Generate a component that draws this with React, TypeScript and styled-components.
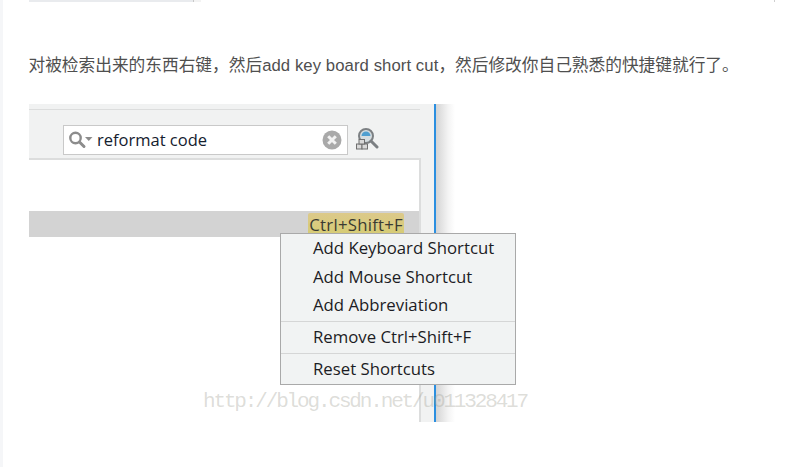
import styled, { createGlobalStyle } from 'styled-components';

const GlobalStyle = createGlobalStyle`
  html, body {
    margin: 0;
    padding: 0;
    background: #fff;
  }
`;

const Page = styled.div`
  position: relative;
  width: 790px;
  height: 467px;
  overflow: hidden;
  background: #fff;
  display: flex;
`;

const LeftGutter = styled.div`
  width: 3px;
  flex-shrink: 0;
  background: #f5f6f8;
`;

const Content = styled.div`
  flex-grow: 1;
  padding-left: 26px;
  display: flex;
  flex-direction: column;
`;

const TopScrap = styled.div`
  display: flex;
  height: 2px;
`;

const ScrapBar = styled.div`
  width: 164px;
  background: #e9ebee;
  border-right: 1px solid #c8c8c8;
`;

const ScrapTail = styled.div`
  width: 7px;
  background: #f3f3f3;
`;

const Paragraph = styled.p`
  margin: 53px 0 0 -0.5px;
  height: 22px;
  line-height: 22px;
  font-family: "Liberation Sans", "Noto Sans CJK SC", sans-serif;
  font-size: 16.7px;
  color: #4f4f4f;
  white-space: nowrap;
`;

const Latin = styled.span`
  letter-spacing: 0.08px;
`;

const Shot = styled.div`
  position: relative;
  margin-top: 27px;
  width: 426px;
  height: 318px;
  display: flex;
  font-family: "Open Sans", "Noto Sans", sans-serif;
`;

const Window = styled.div`
  width: 405px;
  background: #f1f2f2;
  display: flex;
  flex-direction: column;
`;

const BlueEdge = styled.div`
  width: 2px;
  background: #2b8fe0;
`;

const Shadow = styled.div`
  width: 19px;
  background: linear-gradient(to right, #d4d4d4, #f4f4f4 65%, #fff);
`;

const TopLine = styled.div`
  margin-top: 5px;
  width: 391px;
  height: 1px;
  background: #dcdddd;
`;

const Toolbar = styled.div`
  box-sizing: border-box;
  height: 48px;
  padding: 0 0 3px 34px;
  display: flex;
  align-items: flex-end;
`;

const SearchBox = styled.div`
  box-sizing: border-box;
  width: 285px;
  height: 30px;
  padding: 0 5px;
  display: flex;
  align-items: center;
  background: #fff;
  border: 1px solid #c9c9c9;
`;

const SearchText = styled.span`
  flex-grow: 1;
  margin: 0 0 2px 4px;
  font-size: 16.5px;
  color: #14202e;
`;

const FinderIcon = styled.svg`
  margin: 0 0 4px 7px;
`;

const ListArea = styled.div`
  box-sizing: border-box;
  width: 392px;
  flex-grow: 1;
  padding-top: 51px;
  background: #fff;
  border-top: 2px solid #dcdddd;
  border-right: 2px solid #dcdddd;
`;

const SelectedRow = styled.div`
  height: 26px;
  padding-right: 15px;
  display: flex;
  justify-content: flex-end;
  align-items: flex-end;
  background: #d3d3d3;
`;

const ShortcutMark = styled.span`
  box-sizing: border-box;
  height: 24px;
  padding: 0 1px;
  line-height: 24px;
  font-size: 16.75px;
  letter-spacing: 0.25px;
  color: #3a3a32;
  border-radius: 2px 2px 0 0;
  background: linear-gradient(to bottom, #dcc98a, #d5cc72);
`;

const Menu = styled.div`
  position: absolute;
  left: 251px;
  top: 129px;
  box-sizing: border-box;
  width: 236px;
  height: 152px;
  background: #f1f3f3;
  border: 1px solid #a9a9a9;
`;

const MenuItem = styled.div`
  height: 28.5px;
  line-height: 28.5px;
  padding-left: 32px;
  font-size: 16.75px;
  color: #1c1c24;
  white-space: nowrap;
`;

const MenuDivider = styled.div`
  height: 1px;
  margin: 1.25px 0;
  background: #d5d6d6;
`;

const Watermark = styled.div`
  position: absolute;
  left: 203px;
  top: 390px;
  font-family: "Liberation Mono", monospace;
  font-size: 21px;
  letter-spacing: -2.15px;
  color: rgba(160, 160, 150, 0.36);
  white-space: nowrap;
`;

const RightTick = styled.div`
  position: absolute;
  right: 15px;
  top: 0;
  width: 1px;
  height: 2px;
  background: #cfcfcf;
`;

const SearchGlyph = () => (
  <svg width="24" height="20" viewBox="0 0 24 20">
    <circle cx="6.5" cy="8" r="5.2" fill="none" stroke="#8c8c8c" strokeWidth="2.4" />
    <path d="M10.5 12 L15 16.5" stroke="#8c8c8c" strokeWidth="3" strokeLinecap="round" />
    <path d="M16 7 H23.5 L19.75 11 Z" fill="#8c8c8c" />
  </svg>
);

const ClearGlyph = () => (
  <svg width="20" height="20" viewBox="0 0 20 20">
    <circle cx="10" cy="10" r="9.5" fill="#a9a9a9" />
    <path d="M6.2 6.2 L13.8 13.8 M13.8 6.2 L6.2 13.8" stroke="#f1f1f1" strokeWidth="3" />
  </svg>
);

const FinderGlyph = () => (
  <FinderIcon width="24" height="24" viewBox="0 0 24 24">
    <circle cx="11" cy="9" r="7" fill="#d6dde0" stroke="#7c8083" strokeWidth="2" />
    <path d="M6.5 9 A4.5 4.5 0 0 1 15.5 9 Z" fill="#4f9fd0" />
    <path d="M16 14 L22 20" stroke="#7c8083" strokeWidth="3" strokeLinecap="round" />
    <rect x="1.5" y="17" width="5.5" height="5" fill="#d8d8d8" stroke="#6f6f6f" />
    <rect x="7" y="17" width="5.5" height="5" fill="#d8d8d8" stroke="#6f6f6f" />
    <rect x="4" y="12.5" width="5.5" height="4.5" fill="#d8d8d8" stroke="#6f6f6f" />
  </FinderIcon>
);

export default function App() {
  return (
    <>
      <GlobalStyle />
      <Page>
        <LeftGutter />
        <Content>
          <TopScrap>
            <ScrapBar />
            <ScrapTail />
          </TopScrap>
          <Paragraph>
            对被检索出来的东西右键，然后<Latin>add key board short cut</Latin>，然后修改你自己熟悉的快捷键就行了。
          </Paragraph>
          <Shot>
            <Window>
              <TopLine />
              <Toolbar>
                <SearchBox>
                  <SearchGlyph />
                  <SearchText>reformat code</SearchText>
                  <ClearGlyph />
                </SearchBox>
                <FinderGlyph />
              </Toolbar>
              <ListArea>
                <SelectedRow>
                  <ShortcutMark>Ctrl+Shift+F</ShortcutMark>
                </SelectedRow>
              </ListArea>
            </Window>
            <BlueEdge />
            <Shadow />
            <Menu>
              <MenuItem>Add Keyboard Shortcut</MenuItem>
              <MenuItem>Add Mouse Shortcut</MenuItem>
              <MenuItem>Add Abbreviation</MenuItem>
              <MenuDivider />
              <MenuItem>Remove Ctrl+Shift+F</MenuItem>
              <MenuDivider />
              <MenuItem>Reset Shortcuts</MenuItem>
            </Menu>
          </Shot>
        </Content>
        <Watermark>http://blog.csdn.net/u011328417</Watermark>
        <RightTick />
      </Page>
    </>
  );
}
